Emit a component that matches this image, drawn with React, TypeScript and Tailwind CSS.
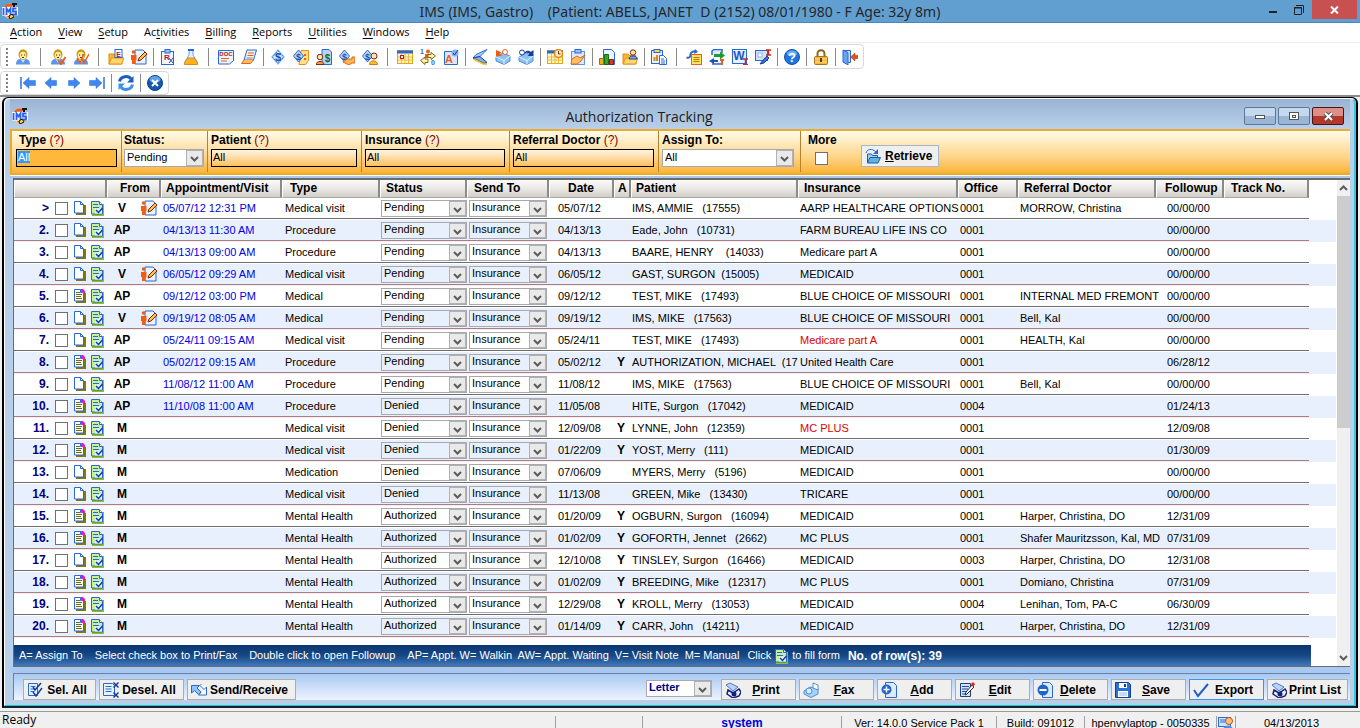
import React, { useEffect, useRef, useState } from "react";

const BLUE = "#2a68d4";
const ORANGE = "#ee5f14";

/* ---------- small icon parts ---------- */

function Icon({ size = 16, children }: { size?: number; children: React.ReactNode }) {
  return (
    <svg width={size} height={size} viewBox="0 0 16 16" fill="none" className="shrink-0" aria-hidden="true">
      {children}
    </svg>
  );
}

function Glyph({ x, y, size, fill, children }: { x: number; y: number; size: number; fill: string; children: string }) {
  return (
    <text x={x} y={y} fontSize={size} fill={fill} fontFamily="Liberation Sans, sans-serif" fontWeight="bold" textAnchor="middle">
      {children}
    </text>
  );
}

const person = (
  <>
    <path d="M1 15.500c0-4 2-5.500 4.500-5.500h5c2.500 0 4.500 1.500 4.500 5.500z" fill="#5b96ee" />
    <path d="M5.500 10h5L8 14z" fill="#cfe2ff" />
    <ellipse cx="8" cy="5.500" rx="4.500" ry="5.200" fill="#c79a10" />
    <ellipse cx="8" cy="6.500" rx="3.300" ry="3.800" fill="#ffe9a0" />
    <path d="M6 6h1.200M9 6h1.200M7 8.500h2" stroke="#4a3510" />
  </>
);

const diamond = (
  <>
    <path d="M8 0l7 8-7 8-7-8z" fill="#9cc6f7" />
    <path d="M8 1.500l5.500 6.500L8 14.500 2.500 8z" fill="#d7e9ff" stroke={BLUE} strokeDasharray="2 1" />
    <Glyph x={8} y={12} size={11} fill="#1c4fa8">$</Glyph>
  </>
);

const smallDiamond = (
  <>
    <path d="M5.500 1l5 6-5 6-5-6z" fill="#b8d8fb" stroke={BLUE} />
    <Glyph x={5.5} y={10.5} size={9} fill="#1c4fa8">$</Glyph>
  </>
);

const printerBase = (
  <>
    <path d="M1 8l7-4 7 3v5l-6 3.500L1 12z" fill="#8fc1f3" stroke="#4e8fd6" />
    <path d="M1 8l8 3.500L15 7M9 11.500v4" stroke="#e4f2ff" />
  </>
);

const folder = (
  <>
    <path d="M1 15V5h5l1 1.500h7V15z" fill="#ffb52e" stroke="#e08a10" />
    <path d="M3.500 9H16l-2.500 6H1z" fill="#ffd66b" stroke="#e9901a" />
  </>
);

const calendar = (
  <>
    <rect x="0.500" y="1.500" width="15" height="13" fill="#fff7c8" stroke="#e7a51a" />
    <path d="M0 3h16" stroke={BLUE} strokeWidth="3" />
    <path d="M4.500 5v9M8 5v9M11.500 5v9M1 8h14M1 11h14" stroke="#f0b93c" />
  </>
);

const icons: Record<string, React.ReactNode> = {
  "Patient": person,
  "Check in": <>{person}<path d="M8 11l3 4 4.500-7" stroke={ORANGE} strokeWidth="2" /></>,
  "Check out": <>{person}<path d="M4 9l3 5 4-9M9 10l2 4 5-9" stroke={ORANGE} strokeWidth="1.500" /></>,
  "EMR folder": <>{folder}<rect x="7" y="0.500" width="7" height="8" fill="#fff" stroke={BLUE} /><Glyph x={10.5} y={7.500} size={7} fill="#b01818">E</Glyph></>,
  "Visit note": (
    <>
      <path d="M4 1h8l3 3v11H4z" fill="#e9f2ff" stroke={BLUE} />
      <circle cx="2.500" cy="3" r="1.800" fill={ORANGE} />
      <path d="M0 6h5.500v5H4.500v4H1v-4H0z" fill={ORANGE} />
      <path d="M7 12l1-3 6-6 2 2-6 6z" fill="#ffc83a" stroke="#8c1d10" />
    </>
  ),
  "Prescription": (
    <>
      <rect x="1.500" y="2.500" width="12" height="13" fill="#eef5ff" stroke={BLUE} />
      <rect x="5" y="0.500" width="5" height="3.500" fill="#9cc0f5" stroke={BLUE} />
      <Glyph x={7} y={11} size={8} fill="#c01818">R</Glyph>
      <path d="M9 9l4 5M13 9l-4 5" stroke="#2446a8" />
    </>
  ),
  "Lab": (
    <>
      <path d="M6 1v5L1.500 13.500V15h13v-1.500L10 6V1z" fill="#e4f0ff" stroke="#6da0e8" />
      <path d="M5 9l-3.500 5v1.500h13V14L11 9z" fill="#ffb21c" stroke="#e08a10" />
      <path d="M5 1h6" stroke={BLUE} strokeWidth="2" />
    </>
  ),
  "Document": (
    <>
      <path d="M0.500 1.500h15v10l-4 3.500h-11z" fill="#eaf2ff" stroke={BLUE} />
      <Glyph x={8} y={7} size={6} fill="#b01818">DOC</Glyph>
      <path d="M3 9.500h8M3 12h6" stroke={ORANGE} />
    </>
  ),
  "Notes": (
    <>
      <path d="M6 1h9.500l-3 10H3z" fill="#eaf2ff" stroke={BLUE} />
      <path d="M3 11l-2.500 3.500h9L12.500 11" fill="#ffc05a" stroke={ORANGE} />
      <path d="M7 4h6M6.500 6.500h6M5.500 9h6" stroke={ORANGE} />
    </>
  ),
  "Charges": diamond,
  "Payments": <><path d="M8 1.500h7.500v10l-3 4H6z" fill="#ffe08a" stroke="#e88c1a" />{smallDiamond}<path d="M12 5v2M12 9v2" stroke={ORANGE} strokeWidth="2" /></>,
  "Statement": (
    <>
      <path d="M6 0.500h7l2.500 2.500v12.500H6z" fill="#b9d4fb" stroke={BLUE} />
      <Glyph x={11.5} y={13} size={10} fill="#156b28">$</Glyph>
      <circle cx="4" cy="8" r="2.800" fill="#ffe3b0" stroke="#7a2c10" />
      <path d="M0 15.500c0-4 8-4 8 0z" fill="#ff9a4a" stroke="#7a2c10" />
    </>
  ),
  "Claims": <>{smallDiamond}<path d="M4 13l4-3h5V8h3v6h-3l-3 2z" fill="#ffb84d" stroke="#e0641a" /></>,
  "Patient balance": <>{smallDiamond}<circle cx="12" cy="7" r="3" fill="#ffe3b0" stroke="#7a2c10" /><path d="M7.500 15.500c0-5 8-5 8 0z" fill="#ffc02a" stroke="#d07a10" /></>,
  "Schedule": <>{calendar}<rect x="3.500" y="6.500" width="3" height="3" fill="#fff" stroke="#c01818" /></>,
  "Patient flow": (
    <>
      <circle cx="8" cy="2.500" r="2" fill={ORANGE} />
      <path d="M5 5h6v4H5z" fill={ORANGE} />
      <path d="M8 5.500h3v-2l4.500 3.500L11 10.500v-2H8zM8 10H5V8L0.500 11.500 5 15.500v-2h3z" fill="#fff2b0" stroke="#7d6a10" />
      <Glyph x={2} y={5} size={7} fill={BLUE}>1</Glyph>
      <Glyph x={13} y={16} size={7} fill={BLUE}>0</Glyph>
    </>
  ),
  "Authorization": (
    <>
      <path d="M1.500 2.500h9l4 4v9h-13z" fill="#d9e8ff" stroke={BLUE} />
      <Glyph x={6} y={13.500} size={11} fill={ORANGE}>A</Glyph>
      <circle cx="12" cy="4" r="3.500" fill="#7fb2f5" />
      <path d="M10 4l1.500 2L15 1" stroke="#1c3f98" />
    </>
  ),
  "Scan": <><path d="M15 0.500L4 5.500 1 9l7-1.500z" fill="#a9cdfa" stroke={BLUE} /><path d="M1 9l11 5.500 3-1-7-6z" fill="#7aaef0" stroke="#1c3f98" /><path d="M1.500 10l10 5h3.500" stroke="#f2b81c" strokeWidth="1.500" /></>,
  "Fax in": <>{printerBase}<path d="M1 1v6h6L5 5c2-3 5-2 5 0" fill={ORANGE} /><circle cx="10" cy="3" r="2.500" fill="#fff" stroke={ORANGE} /></>,
  "Fax out": <>{printerBase}<path d="M15.500 1v6h-6l2-2c-2-2-4-1-5 0 0-4 5-4 6-2z" fill="#123f9c" /><circle cx="4" cy="3.500" r="2.500" fill="#fff" stroke="#123f9c" /></>,
  "Appointments": <>{calendar}<circle cx="11.500" cy="4.500" r="4" fill="#fff1c0" stroke="#e8801a" strokeWidth="1.500" /><path d="M11.500 2v3h2" stroke="#7a2c10" /></>,
  "Tasks": (
    <>
      <rect x="1.500" y="2.500" width="13" height="13" fill="#dbe9ff" stroke="#5f97ea" />
      <rect x="5" y="0.500" width="6" height="3.500" fill="#9cc0f5" stroke={BLUE} />
      <path d="M1 15l1-5 5-3 3 2 5-3-4 6-4 3z" fill="#ffc46a" stroke={ORANGE} />
    </>
  ),
  "Chart": (
    <>
      <path d="M4.500 0.500h8l3 3v12h-11z" fill="#eaf3ff" stroke={BLUE} />
      <path d="M0.500 9.500h4v6h-4z" fill="#f0b01c" stroke="#a06a10" />
      <path d="M5.500 5.500h4v10h-4z" fill="#35a52c" stroke="#156b18" />
      <path d="M10.500 10.500h4v5h-4z" fill="#e0341c" stroke="#8c1d10" />
    </>
  ),
  "Patient folder": <>{folder}<circle cx="11" cy="3.500" r="2.700" fill="#ffe3b0" stroke="#7a2c10" /><path d="M7 10c0-4 8-4 8 0z" fill="#7fa8f0" stroke="#1c3f98" /></>,
  "Report": (
    <>
      <rect x="0.500" y="1.500" width="11" height="13" fill="#e6f0ff" stroke={BLUE} />
      <rect x="3" y="0.500" width="6" height="3" fill="#ffd45a" stroke={BLUE} />
      <path d="M3.500 12V8M6 12V6" stroke="#e08a10" strokeWidth="2" />
      <path d="M8.500 6.500h4l3 3v6h-7z" fill="#fff" stroke={BLUE} />
      <path d="M10 10h3M10 12h4M10 14h4" stroke={BLUE} />
    </>
  ),
  "Send note": <><path d="M0.500 8.500c3 1 4-1 4-3s3-4 6-3" stroke={BLUE} strokeWidth="2" /><path d="M9 0l3 3-4 2z" fill={BLUE} /><rect x="5.500" y="5.500" width="10" height="10" fill="#ffe35a" stroke={ORANGE} /><path d="M7.500 8.500h6M7.500 10.500h6M7.500 12.500h6" stroke="#b07a10" /></>,
  "Transfer": (
    <>
      <path d="M3 6V2l2-1.500h8V4M13 12v3H3" fill="#dfeaff" stroke={BLUE} strokeWidth="1.500" />
      <path d="M5 5h6V2.500l5 4-5 4V8H5z" fill="#1c9a34" />
      <path d="M9 11H5V9l-5 3 5 3v-2h4z" fill="#1f4fc0" />
      <path d="M11 11h4M13 11v5" stroke={ORANGE} strokeWidth="2" />
    </>
  ),
  "Word": <><rect x="0.500" y="0.500" width="14" height="14" fill="#e6f0ff" stroke={BLUE} /><Glyph x={7} y={11} size={12} fill="#1f55c4">W</Glyph><path d="M11 10h5M11 15.500h5M13.500 10v5" stroke="#d0241c" strokeWidth="1.500" /></>,
  "Template": (
    <>
      <rect x="0.500" y="1.500" width="12" height="10" fill="#cfe2ff" stroke={BLUE} />
      <rect x="3" y="4" width="4" height="4" fill="#fff" stroke="#8fb4ee" />
      <path d="M5 15l3-4 4-4 2 2-5 5z" fill="#3e72d8" stroke="#1c3f98" />
      <path d="M11 1h5M11 6h5M13.500 1v5" stroke="#d0241c" strokeWidth="1.500" />
    </>
  ),
  "Help": <><circle cx="8" cy="8" r="7.500" fill="#1f74e0" stroke="#1650b0" /><ellipse cx="8" cy="4.500" rx="5" ry="3" fill="#6cb0f8" /><Glyph x={8} y={12.5} size={13} fill="#fff">?</Glyph></>,
  "Lock": <><path d="M4.500 8V5c0-5 7-5 7 0v3" stroke="#8a6a24" strokeWidth="2" /><rect x="1.500" y="7.500" width="13" height="8" rx="1" fill="#f0b83c" stroke="#a8741c" /><path d="M2 10h12M2 13h12" stroke="#ffdf80" /><path d="M8 9v4" stroke="#5a3a08" strokeWidth="2" /></>,
  "Exit": <><path d="M1.500 1.500h7v12h-7z" fill="#cfe2ff" stroke={BLUE} /><path d="M1 1l5 2.500V16l-5-3z" fill="#69a2f2" stroke={BLUE} /><path d="M16 6.500h-3V4L8.500 8l4.500 4V9.500h3z" fill="#e0501c" stroke="#a02c10" strokeWidth="0.500" /></>,
};

const toolGroups: { gap: string; names: string[] }[] = [
  { gap: "w-3", names: ["Patient"] },
  { gap: "w-3", names: ["Check in", "Check out"] },
  { gap: "w-3", names: ["EMR folder", "Visit note"] },
  { gap: "w-1.5", names: ["Prescription", "Lab"] },
  { gap: "w-3", names: ["Document", "Notes"] },
  { gap: "w-1.5", names: ["Charges", "Payments", "Statement", "Claims", "Patient balance"] },
  { gap: "w-3", names: ["Schedule", "Patient flow", "Authorization"] },
  { gap: "w-1.5", names: ["Scan", "Fax in", "Fax out"] },
  { gap: "w-1.5", names: ["Appointments", "Tasks"] },
  { gap: "w-1.5", names: ["Chart", "Patient folder"] },
  { gap: "w-1.5", names: ["Report"] },
  { gap: "w-3", names: ["Send note", "Transfer", "Word", "Template"] },
  { gap: "w-1.5", names: ["Help"] },
  { gap: "w-1.5", names: ["Lock"] },
  { gap: "w-1.5", names: ["Exit"] },
];

const arrowLeft = "M8 2.500V5.500h5.500v5H8v3L2 8z";
const arrowRight = "M8 2.500V5.500H2.500v5H8v3L14 8z";

function Separator({ width }: { width: string }) {
  return (
    <span className={`flex justify-center ${width}`}>
      <span className="h-[18px] w-px bg-[#8a8a8a]" />
    </span>
  );
}

function ToolButton({ label, children }: { label: string; children: React.ReactNode }) {
  return (
    <button type="button" aria-label={label} title={label} className="flex h-6 w-[23px] items-center justify-center">
      {children}
    </button>
  );
}

function Grip() {
  return (
    <span className="ml-[5px] flex flex-col gap-[2px]">
      {[0, 1, 2, 3, 4].map((n) => <span key={n} className="h-[2px] w-[2px] bg-[#808080]" />)}
    </span>
  );
}

function AppLogo() {
  return (
    <Icon>
      <circle cx="8" cy="8" r="7.500" fill="#f5b8a2" />
      <path d="M2 4c2-4.500 9-4.500 11-1zM5 13c3 4 7 2 8-1z" fill={ORANGE} />
      <rect x="0" y="4" width="16" height="8.500" fill="#fff" />
      <path d="M1.500 5v7M4.500 12V5.500l2 3 2-3V12M14.500 5.500h-3.500v3h3v3h-4" stroke="#2a5ff0" strokeWidth="1.800" />
      <path d="M10 0h5v2h-2v2h-2V2h-1z" fill="#111" />
      <path d="M7 13l3-2 2 3-4 2z" fill="#ffe01c" stroke="#111" />
    </Icon>
  );
}

/* ---------- drop-down ---------- */

function Combo({ label, value, options, className, text = "" }: { label: string; value: string; options: string[]; className: string; text?: string }) {
  return (
    <span className={`relative flex border border-[#a9a9ad] ${className}`}>
      <select aria-label={label} defaultValue={value} className={`min-w-0 flex-1 appearance-none bg-transparent pr-[18px] pb-[2px] pl-[2px] leading-[13px] outline-none ${text}`}>
        {options.map((o) => <option key={o}>{o}</option>)}
      </select>
      <span className="pointer-events-none absolute inset-y-0 right-0 flex w-[17px] items-center justify-center border border-[#b2b2b4] bg-[#e9e9e9] pt-[2px]">
        <svg width="9" height="6" viewBox="0 0 9 6" fill="none" aria-hidden="true">
          <path d="M1 1l3.500 3.500L8 1" stroke="#5c5c5c" strokeWidth="2" />
        </svg>
      </span>
    </span>
  );
}

const statuses = ["Pending", "Denied", "Authorized"];

/* ---------- table data ---------- */

type Row = {
  from: string; when?: string; type: string; status: string; date: string; a?: boolean; patient: string;
  ins: string; red?: boolean; office: string; doctor?: string; followup: string; lined?: boolean;
};

const rows: Row[] = [
  { from: "V", when: "05/07/12 12:31 PM", type: "Medical visit", status: "Pending", date: "05/07/12", patient: "IMS, AMMIE   (17555)", ins: "AARP HEALTHCARE OPTIONS", office: "0001", doctor: "MORROW, Christina", followup: "00/00/00" },
  { from: "AP", when: "04/13/13 11:30 AM", type: "Procedure", status: "Pending", date: "04/13/13", patient: "Eade, John   (10731)", ins: "FARM BUREAU LIFE INS CO", office: "0001", followup: "00/00/00" },
  { from: "AP", when: "04/13/13 09:00 AM", type: "Procedure", status: "Pending", date: "04/13/13", patient: "BAARE, HENRY    (14033)", ins: "Medicare part A", office: "0001", followup: "00/00/00" },
  { from: "V", when: "06/05/12 09:29 AM", type: "Medical visit", status: "Pending", date: "06/05/12", patient: "GAST, SURGON  (15005)", ins: "MEDICAID", office: "0001", followup: "00/00/00" },
  { from: "AP", when: "09/12/12 03:00 PM", type: "Medical", status: "Pending", date: "09/12/12", patient: "TEST, MIKE   (17493)", ins: "BLUE CHOICE OF MISSOURI", office: "0001", doctor: "INTERNAL MED FREMONT", followup: "00/00/00", lined: true },
  { from: "V", when: "09/19/12 08:05 AM", type: "Medical", status: "Pending", date: "09/19/12", patient: "IMS, MIKE   (17563)", ins: "BLUE CHOICE OF MISSOURI", office: "0001", doctor: "Bell, Kal", followup: "00/00/00" },
  { from: "AP", when: "05/24/11 09:15 AM", type: "Medical visit", status: "Pending", date: "05/24/11", patient: "TEST, MIKE   (17493)", ins: "Medicare part A", red: true, office: "0001", doctor: "HEALTH, Kal", followup: "00/00/00" },
  { from: "AP", when: "05/02/12 09:15 AM", type: "Procedure", status: "Pending", date: "05/02/12", a: true, patient: "AUTHORIZATION, MICHAEL  (17", ins: "United Health Care", office: "0001", followup: "06/28/12", lined: true },
  { from: "AP", when: "11/08/12 11:00 AM", type: "Procedure", status: "Pending", date: "11/08/12", patient: "IMS, MIKE   (17563)", ins: "BLUE CHOICE OF MISSOURI", office: "0001", doctor: "Bell, Kal", followup: "00/00/00" },
  { from: "AP", when: "11/10/08 11:00 AM", type: "Procedure", status: "Denied", date: "11/05/08", patient: "HITE, Surgon   (17042)", ins: "MEDICAID", office: "0004", followup: "01/24/13", lined: true },
  { from: "M", type: "Medical visit", status: "Denied", date: "12/09/08", a: true, patient: "LYNNE, John   (12359)", ins: "MC PLUS", red: true, office: "0001", followup: "12/09/08", lined: true },
  { from: "M", type: "Medical visit", status: "Denied", date: "01/22/09", a: true, patient: "YOST, Merry   (111)", ins: "MEDICAID", office: "0001", followup: "01/30/09", lined: true },
  { from: "M", type: "Medication", status: "Denied", date: "07/06/09", patient: "MYERS, Merry   (5196)", ins: "MEDICAID", office: "0001", followup: "00/00/00" },
  { from: "M", type: "Medical visit", status: "Denied", date: "11/13/08", patient: "GREEN, Mike   (13430)", ins: "TRICARE", office: "0001", followup: "00/00/00" },
  { from: "M", type: "Mental Health", status: "Authorized", date: "01/20/09", a: true, patient: "OGBURN, Surgon   (16094)", ins: "MEDICAID", office: "0001", doctor: "Harper, Christina, DO", followup: "12/31/09", lined: true },
  { from: "M", type: "Mental Health", status: "Authorized", date: "01/02/09", a: true, patient: "GOFORTH, Jennet   (2662)", ins: "MC PLUS", office: "0001", doctor: "Shafer Mauritzsson, Kal, MD", followup: "07/31/09", lined: true },
  { from: "M", type: "Mental Health", status: "Authorized", date: "12/10/08", a: true, patient: "TINSLEY, Surgon   (16466)", ins: "MEDICAID", office: "0003", doctor: "Harper, Christina, DO", followup: "12/31/08" },
  { from: "M", type: "Mental Health", status: "Authorized", date: "01/02/09", a: true, patient: "BREEDING, Mike   (12317)", ins: "MC PLUS", office: "0001", doctor: "Domiano, Christina", followup: "07/31/09", lined: true },
  { from: "M", type: "Mental Health", status: "Authorized", date: "12/29/08", a: true, patient: "KROLL, Merry   (13053)", ins: "MEDICAID", office: "0004", doctor: "Lenihan, Tom, PA-C", followup: "06/30/09", lined: true },
  { from: "M", type: "Mental Health", status: "Authorized", date: "01/14/09", a: true, patient: "CARR, John   (14211)", ins: "MEDICAID", office: "0001", doctor: "Harper, Christina, DO", followup: "12/31/09", lined: true },
];

const columns = [
  { title: "", col: "w-[93px]", pad: "" },
  { title: "From", col: "w-[54px]", pad: "pl-3" },
  { title: "Appointment/Visit", col: "w-[121px]", pad: "pl-1" },
  { title: "Type", col: "w-[98px]", pad: "pl-[7px]" },
  { title: "Status", col: "w-[87px]", pad: "pl-[5px]" },
  { title: "Send To", col: "w-[82px]", pad: "pl-[6px]" },
  { title: "Date", col: "w-[65px]", pad: "pl-[18px]" },
  { title: "A", col: "w-[17px]", pad: "pl-[3px]" },
  { title: "Patient", col: "w-[167px]", pad: "pl-1" },
  { title: "Insurance", col: "w-[160px]", pad: "pl-[5px]" },
  { title: "Office", col: "w-[60px]", pad: "pl-[5px]" },
  { title: "Referral Doctor", col: "w-[138px]", pad: "pl-[5px]" },
  { title: "Followup", col: "w-[68px]", pad: "pl-2" },
  { title: "Track No.", col: "w-[85px]", pad: "pl-[6px]" },
];

function PageIcon({ lined }: { lined?: boolean }) {
  return (
    <svg width="12" height="14" viewBox="0 0 12 14" fill="none" aria-hidden="true">
      <path d="M2 13h9V4" stroke="#7d7a10" strokeWidth="2" />
      <path d="M0.500 0.500h6l3 3v8.500h-9z" fill="#fff" stroke={BLUE} />
      <path d="M6.500 0.500v3h3" stroke={BLUE} />
      {lined && (
        <>
          <path d="M7 0h2l2 2v2H7z" fill="#e815d8" />
          <path d="M2 3.500h4M2 5.500h6M2 7.500h5M2 9.500h6" stroke="#6f6a10" />
        </>
      )}
    </svg>
  );
}

function FormIcon() {
  return (
    <svg width="13" height="16" viewBox="0 0 13 16" fill="none" className="shrink-0" aria-hidden="true">
      <path d="M1 15h11.500V4" stroke="#8fc21c" strokeWidth="2" />
      <path d="M0.500 1.500h8l3 3v9.500h-11z" fill="#c6f09c" stroke={BLUE} />
      <path d="M8.500 1.500v3h3" fill="#fff" stroke={BLUE} />
      <path d="M2 4.500h5M2 7.500h6" stroke={BLUE} />
      <path d="M4 8.500h7v5H4z" fill="#e2f4ff" />
      <path d="M5 10l2.500 2.500L11.500 8" stroke="#123f9c" strokeWidth="1.500" />
    </svg>
  );
}

/* ---------- footer icons ---------- */

const footerIcons: Record<string, React.ReactNode> = {
  sel: <><path d="M1.500 1.500h9v12h-9z" fill="#e6f1ff" stroke={BLUE} /><path d="M3.500 4.500h5M3.500 7h4M3.500 9.500h4" stroke={BLUE} /><path d="M6 5l2 3 6-7M6 10l3 4 6-8" stroke="#123f9c" strokeWidth="1.500" /></>,
  desel: <><path d="M0.500 1.500h9l2 2v10h-11z" fill="#e6f1ff" stroke={BLUE} /><path d="M2.500 4.500h6M2.500 7h6M2.500 9.500h6" stroke={BLUE} /><path d="M10.500 0.500l5 5M15.500 0.500l-5 5M10.500 10.500l5 5M15.500 10.500l-5 5" stroke="#123f9c" strokeWidth="1.500" /></>,
  send: <><path d="M0.500 3.500h8L6 6l4 4-2.500 2.500-4-4L0.500 11z" fill="#8fc4f8" stroke={BLUE} /><path d="M15.500 5v8h-8l2.500-2.500M15.500 5L13 7.500 9 3.500l1.500-1.500" fill="#fff" stroke={BLUE} /></>,
  print: <><path d="M1 3l4-2 8 4-5 4z" fill="#b9d4f8" stroke="#4e78c8" /><path d="M3 8l5 3 6-4 2 3-2 4-6 2-6-4z" fill="#e8f0ff" stroke="#16227a" strokeWidth="1.500" /><circle cx="9" cy="12" r="2.500" fill="#16227a" /></>,
  fax: <><path d="M1 9l6-4 8 2v5l-7 3.500L1 12z" fill="#a9d2f8" stroke="#4e8fd6" /><circle cx="6" cy="9" r="3" fill="#d9edff" stroke="#4e8fd6" /><path d="M10 6V1l5 2v5z" fill="#fff" stroke="#4e8fd6" /></>,
  add: <><path d="M4.500 0.500h8l3 3v12h-11z" fill="#dcebff" stroke={BLUE} /><circle cx="5.500" cy="7.500" r="5" fill="#1f66cc" /><path d="M2.500 7.500h6M5.500 4.500v6" stroke="#fff" strokeWidth="1.500" /></>,
  edit: <><path d="M1.500 1.500h10v13h-10z" fill="#cfe4ff" stroke="#1f3f80" /><path d="M3 4.500h7M3 7h6M3 9.500h5M3 12h5" stroke="#1f4f9c" /><path d="M6 13l1-3 6-7 2 2-7 7z" fill="#f4f4f4" stroke="#333" /><path d="M12 2l2-2 2 2-2 3z" fill="#e0241c" /></>,
  del: <><path d="M5.500 0.500h7l3 3v12h-10z" fill="#dcebff" stroke={BLUE} /><circle cx="6" cy="8" r="5.500" fill="#1f66cc" /><path d="M2.500 8h7" stroke="#fff" strokeWidth="2" /></>,
  save: <><path d="M0.500 0.500h13l2 2v13h-15z" fill="#2a72d8" stroke="#123f8c" /><path d="M4 1h8v5H4z" fill="#fff" /><path d="M9 2h2v3H9z" fill="#123f8c" /><path d="M3 9h10v6H3z" fill="#fff" /><path d="M4 11h8M4 13h8" stroke="#8fb4ee" /></>,
  exp: <path d="M1 8l4 6L15 2" stroke="#1f5fd0" strokeWidth="2" />,
};

function FooterButton({ icon, label, width, focus, hotkey }: { icon: string; label: string; width: string; focus?: boolean; hotkey?: boolean }) {
  return (
    <button type="button" className={`flex h-[21px] items-center border bg-[#efefef] pr-1 pl-[3px] text-xs font-bold text-black ${focus ? "border-[#3c94e8]" : "border-[#acacac]"} ${width}`}>
      <Icon>{footerIcons[icon]}</Icon>
      <span className="flex-1 text-center whitespace-nowrap">
        {hotkey ? <><span className="underline">{label[0]}</span>{label.slice(1)}</> : label}
      </span>
    </button>
  );
}

function Field({ label, width }: { label: string; width: string }) {
  const id = label.replace(" ", "-").toLowerCase();
  return (
    <div className={`border-r border-[#b5832d] pr-1 pl-[3px] ${width}`}>
      <label htmlFor={id} className="block text-xs leading-[18px] font-bold whitespace-nowrap text-black">
        {label} <span className="font-normal text-[#800000]">(?)</span>
      </label>
      <input id={id} defaultValue="All" className="block h-[18px] w-full border border-black bg-linear-to-b from-[#fff4e0] to-[#fdc05a] px-px pb-[2px] text-[11px] outline-none" />
    </div>
  );
}

const menus: [string, string, string][] = [
  ["", "A", "ction"], ["", "V", "iew"], ["", "S", "etup"], ["Ac", "t", "ivities"], ["", "B", "illing"],
  ["", "R", "eports"], ["", "U", "tilities"], ["", "W", "indows"], ["", "H", "elp"],
];

export default function App() {
  const typeRef = useRef<HTMLInputElement>(null);
  const [checked, setChecked] = useState<Record<number, boolean>>({});

  useEffect(() => {
    typeRef.current?.focus();
    typeRef.current?.select();
  }, []);

  return (
    <div className="flex min-h-screen flex-col bg-white font-['Liberation_Sans',Arial,sans-serif] text-[11px] text-black">
      {/* Application title bar */}
      <header className="flex h-[23px] items-start border-b border-[#4a87bd] bg-[#629fd1]">
        <span className="flex w-[140px] pt-[3px] pl-[2px]"><AppLogo /></span>
        <h1 className="flex-1 text-center font-['Noto_Sans',sans-serif] text-[14px] leading-[23px] whitespace-pre text-[#262626]">
          {"IMS (IMS, Gastro)    (Patient: ABELS, JANET  D (2152) 08/01/1980 - F Age: 32y 8m)"}
        </h1>
        <div className="flex w-[140px] justify-end pr-[3px]">
          <button type="button" aria-label="Minimize" className="flex h-[19px] w-[26px] items-center justify-center">
            <span className="mt-1 h-[2px] w-2 bg-[#222]" />
          </button>
          <button type="button" aria-label="Restore" className="flex h-[19px] w-[26px] items-center justify-center">
            <svg width="10" height="10" viewBox="0 0 10 10" fill="none" aria-hidden="true">
              <path d="M0 3h7.500M2 0.500h7.500V8" stroke="#222" />
              <path d="M0.500 2.500h7v7h-7z" stroke="#222" />
            </svg>
          </button>
          <button type="button" aria-label="Close" className="flex h-[19px] w-[45px] items-center justify-center bg-[#c75050]">
            <svg width="9" height="8" viewBox="0 0 9 8" aria-hidden="true"><path d="M1 0.500l7 7M8 0.500l-7 7" stroke="#fff" strokeWidth="2" /></svg>
          </button>
        </div>
      </header>

      <nav className="flex h-5 items-center gap-4 border-b border-[#ececec] pl-[10px] font-['Open_Sans',sans-serif] text-[11px]">
        {menus.map(([before, key, after]) => (
          <button key={key + after} type="button">{before}<span className="underline underline-offset-2">{key}</span>{after}</button>
        ))}
      </nav>

      {/* Toolbars */}
      <div className="flex flex-col items-start gap-[2px] pt-px">
        <div className="flex h-[25px] items-center rounded-sm border border-[#d8d8d8] pr-[2px]" role="toolbar" aria-label="Main">
          <Grip />
          <span className="w-[3px]" />
          {toolGroups.map((g, i) => (
            <React.Fragment key={i}>
              {i > 0 && <Separator width={g.gap} />}
              {g.names.map((n) => <ToolButton key={n} label={n}><Icon>{icons[n]}</Icon></ToolButton>)}
            </React.Fragment>
          ))}
        </div>
        <div className="flex h-[24px] items-center rounded-sm border border-[#d8d8d8] pr-[2px]" role="toolbar" aria-label="Navigation">
          <Grip />
          <span className="w-2" />
          <ToolButton label="First"><Icon><path d="M1 2v12" stroke="#2e6fe0" strokeWidth="1.500" /><path d="M9 2.500v3h6.500v5H9v3L3 8z" fill="#3f86f0" stroke="#2e6fe0" strokeWidth="0.500" /></Icon></ToolButton>
          <ToolButton label="Previous"><Icon><path d={arrowLeft} fill="#3f86f0" stroke="#2e6fe0" strokeWidth="0.500" /></Icon></ToolButton>
          <ToolButton label="Next"><Icon><path d={arrowRight} fill="#3f86f0" stroke="#2e6fe0" strokeWidth="0.500" /></Icon></ToolButton>
          <ToolButton label="Last"><Icon><path d="M15 2v12" stroke="#2e6fe0" strokeWidth="1.500" /><path d="M7 2.500v3H0.500v5H7v3L13 8z" fill="#3f86f0" stroke="#2e6fe0" strokeWidth="0.500" /></Icon></ToolButton>
          <Separator width="w-1.5" />
          <ToolButton label="Refresh">
            <Icon>
              <path d="M1.500 6.500c1-5.500 9-6.500 11.500-2.500" stroke="#1d5fbe" strokeWidth="3" /><path d="M15.500 1v6.500H9z" fill="#1d5fbe" />
              <path d="M14.500 9.500c-1 5.500-9 6.500-11.500 2.500" stroke="#3f90e8" strokeWidth="3" /><path d="M0.500 15V8.500H7z" fill="#3f90e8" />
            </Icon>
          </ToolButton>
          <Separator width="w-1.5" />
          <ToolButton label="Close form">
            <Icon><circle cx="8" cy="8" r="7.500" fill="#1559ad" stroke="#0c3f80" /><ellipse cx="8" cy="4.500" rx="5.500" ry="3.500" fill="#5aa0e6" /><path d="M5 5l6 6M11 5l-6 6" stroke="#fff" strokeWidth="2" /></Icon>
          </ToolButton>
        </div>
      </div>

      {/* Child window */}
      <div className="flex flex-1 flex-col border-t-2 border-[#8c8c8c] bg-[#f0f0f0] px-[2px] pb-[3px]">
        <main className="flex flex-1 flex-col rounded-t-md border-2 border-t border-black border-b-[#11252b] bg-[#b8cfea]">
          <div className="flex flex-1 flex-col rounded-t-md border-t border-r-2 border-b border-l border-t-white border-r-[#35c8e6] border-b-[#1cc4d4] border-l-white pr-1 pb-[5px] pl-[5px]">
            <div className="flex h-[30px] items-center bg-linear-to-b from-[#99b4d3] to-[#b9d0ea] px-[2px]">
              <span className="flex w-6 pt-1"><AppLogo /></span>
              <h2 className="flex-1 pt-1 text-center font-['Open_Sans',sans-serif] text-[14px] text-[#1c1c1c]">Authorization Tracking</h2>
              <div className="flex w-[106px] justify-end gap-[2px] pt-1 pr-1">
                <button type="button" aria-label="Minimize window" className="flex h-[18px] w-8 items-center justify-center rounded-xs border border-[#5f7699] bg-linear-to-b from-[#c5d8ee] from-50% to-[#9bb6d6] to-50%">
                  <span className="mt-[2px] h-1 w-[10px] border border-[#555] bg-white" />
                </button>
                <button type="button" aria-label="Maximize window" className="flex h-[18px] w-8 items-center justify-center rounded-xs border border-[#5f7699] bg-linear-to-b from-[#c5d8ee] from-50% to-[#9bb6d6] to-50%">
                  <span className="flex h-2 w-[10px] items-center justify-center border border-[#555] bg-white"><span className="h-[3px] w-1 border border-[#555]" /></span>
                </button>
                <button type="button" aria-label="Close window" className="flex h-[18px] w-8 items-center justify-center rounded-xs border border-[#4a1418] bg-linear-to-b from-[#dd8f87] from-50% to-[#b5382a] to-50%">
                  <svg width="11" height="9" viewBox="0 0 11 9" aria-hidden="true"><path d="M2 1l7 7M9 1L2 8" stroke="#555" strokeWidth="4" /><path d="M2 1l7 7M9 1L2 8" stroke="#fff" strokeWidth="2" /></svg>
                </button>
              </div>
            </div>

            {/* Filters */}
            <form className="flex h-[46px] border-2 border-r-0 border-[#eeaa2b] bg-linear-to-b from-[#fffbe9] via-[#fdd68a] via-60% to-[#fbb32f] pb-px" onSubmit={(e) => e.preventDefault()}>
              <div className="w-[110px] border-r border-[#b5832d] pr-1 pl-1">
                <label htmlFor="type" className="block pl-[3px] text-xs leading-[18px] font-bold">Type <span className="font-normal text-[#800000]">(?)</span></label>
                <input id="type" ref={typeRef} defaultValue="All" className="block h-[18px] w-full border border-black bg-[#ffb83c] px-px pb-[2px] text-[11px] caret-transparent outline-none selection:bg-[#3399ff] selection:text-white" />
              </div>
              <div className="w-[86px] border-r border-[#b5832d] pr-[3px] pl-[2px] text-xs">
                <span className="block leading-[18px] font-bold">Status:</span>
                <Combo label="Status" value="Pending" options={statuses} className="h-[18px] bg-white" text="text-[11px]" />
              </div>
              <Field label="Patient" width="w-[154px]" />
              <Field label="Insurance" width="w-[148px]" />
              <Field label="Referral Doctor" width="w-[149px]" />
              <div className="w-[142px] border-r border-[#b5832d] pr-[6px] pl-[3px] text-xs">
                <span className="block leading-[18px] font-bold">Assign To:</span>
                <Combo label="Assign To" value="All" options={["All"]} className="h-[18px] bg-white" text="text-[11px]" />
              </div>
              <div className="w-[54px] pl-[7px]">
                <label htmlFor="more" className="block text-xs leading-[18px] font-bold">More</label>
                <input id="more" type="checkbox" className="mt-[3px] ml-[7px] block h-[13px] w-[13px] appearance-none border border-[#707070] bg-white checked:bg-[#3c94e8]" />
              </div>
              <div className="pt-[14px] pl-[6px]">
                <button type="submit" className="flex h-[22px] w-[78px] items-center gap-1 border border-[#a9b6c8] bg-[#efefef] pl-[3px] text-xs font-bold">
                  <Icon>
                    <path d="M2.500 15V6h4l1 1.500h5V10" fill="#9cd0f0" stroke="#1d5fa8" />
                    <path d="M2.500 15l2.500-5.500h10.500L13 15z" fill="#5fb4e4" stroke="#1d5fa8" />
                    <path d="M1 5c1-4 6-5 10-1" stroke={BLUE} /><path d="M13 1v5H8z" fill={BLUE} />
                  </Icon>
                  <span><span className="underline">R</span>etrieve</span>
                </button>
              </div>
            </form>

            <div className="h-[3px] border-t border-white bg-[#a9c9f2]" />

            {/* Grid */}
            <div className="ml-[3px] flex flex-1 border-t-2 border-b border-l border-[#6b6b6b] bg-white">
              <div className="flex min-w-0 flex-1 flex-col">
                <table className="w-full table-fixed border-separate border-spacing-0">
                  <colgroup>
                    {columns.map((c, i) => <col key={i} className={c.col} />)}
                    <col />
                  </colgroup>
                  <thead>
                    <tr>
                      {columns.map((c, i) => (
                        <th key={i} scope="col" className="p-0">
                          <div className={`h-[18px] border-r-2 border-b border-l border-r-[#8a8a8a] border-b-[#a8a8a8] border-l-white bg-linear-to-b from-[#fafafa] via-[#ebe9e6] via-50% to-[#d2cfc8] text-left text-xs leading-[17px] font-bold whitespace-nowrap ${c.pad}`}>{c.title}</div>
                        </th>
                      ))}
                      <td className="p-0" />
                    </tr>
                  </thead>
                  <tbody>
                    {rows.map((r, i) => {
                      const odd = i % 2 === 1;
                      const cell = `h-[21px] border-b leading-5 whitespace-pre ${odd ? "border-b-[#b5797d]" : "border-b-[#6e6e6e]"}`;
                      return (
                        <tr key={i} className={`h-[22px] align-top ${odd ? "bg-[#e8f0fd]" : "bg-white"}`}>
                          <td className="p-0">
                            <div className={`flex items-center ${cell}`}>
                              <span className="w-[35px] text-right text-xs font-bold text-[#000080]">{i === 0 ? ">" : `${i + 1}.`}</span>
                              <input
                                type="checkbox"
                                aria-label={`Select row ${i + 1}`}
                                checked={!!checked[i]}
                                onChange={() => setChecked({ ...checked, [i]: !checked[i] })}
                                className="ml-[6px] h-[13px] w-[13px] appearance-none border border-[#707070] bg-white checked:bg-[#3c94e8]"
                              />
                              <button type="button" aria-label="Open notes" className="ml-[6px]"><PageIcon lined={r.lined} /></button>
                              <button type="button" aria-label="Fill form" className="ml-[5px]"><FormIcon /></button>
                            </div>
                          </td>
                          <td className="p-0">
                            <div className={`flex items-center ${cell}`}>
                              <span className="w-[30px] text-center text-xs font-bold">{r.from}</span>
                              {r.from === "V" && <span className="ml-1"><Icon>{icons["Visit note"]}</Icon></span>}
                            </div>
                          </td>
                          <td className="p-0"><div className={`pl-[2px] text-[#0000e0] ${cell}`}>{r.when}</div></td>
                          <td className="p-0"><div className={`pl-[3px] ${cell}`}>{r.type}</div></td>
                          <td className="p-0">
                            <div className={`pt-[2px] pl-px ${cell}`}>
                              <Combo label={`Status of row ${i + 1}`} value={r.status} options={statuses} className="h-[17px] w-[86px]" />
                            </div>
                          </td>
                          <td className="p-0">
                            <div className={`pt-[2px] pl-[2px] ${cell}`}>
                              <Combo label={`Send to, row ${i + 1}`} value="Insurance" options={["Insurance"]} className="h-[17px] w-[78px]" />
                            </div>
                          </td>
                          <td className="p-0"><div className={`pl-[9px] ${cell}`}>{r.date}</div></td>
                          <td className="p-0"><div className={`pl-[3px] text-xs font-bold ${cell}`}><span className="leading-5">{r.a ? "Y" : ""}</span></div></td>
                          <td className="p-0"><div className={`pl-px ${cell}`}>{r.patient}</div></td>
                          <td className="p-0"><div className={`pl-[2px] ${r.red ? "text-[#e00000]" : ""} ${cell}`}>{r.ins}</div></td>
                          <td className="p-0"><div className={`pl-[2px] ${cell}`}>{r.office}</div></td>
                          <td className="p-0"><div className={`pl-[2px] ${cell}`}>{r.doctor}</div></td>
                          <td className="p-0"><div className={`pl-[11px] ${cell}`}>{r.followup}</div></td>
                          <td className="p-0"><div className={cell} /></td>
                          <td className="p-0" />
                        </tr>
                      );
                    })}
                  </tbody>
                </table>
                <div className="mt-auto mr-[25px] flex h-[21px] items-center bg-linear-to-b from-[#0a3672] via-[#164884] to-[#4279bd] pl-[5px] whitespace-pre text-white">
                  <span>A= Assign To</span>
                  <span className="ml-3">Select check box to Print/Fax</span>
                  <span className="ml-3">Double click to open Followup</span>
                  <span className="ml-3">AP= Appt. W= Walkin  AW= Appt. Waiting  V= Visit Note  M= Manual</span>
                  <span className="mr-1 ml-2">Click</span>
                  <FormIcon />
                  <span className="ml-1">to fill form</span>
                  <strong className="ml-2 text-xs">No. of row(s): 39</strong>
                </div>
              </div>
              {/* Scroll bar */}
              <div className="ml-px flex w-[13px] flex-col items-center bg-[#f0f0f0]">
                <button type="button" aria-label="Scroll up" className="flex h-4 items-center">
                  <svg width="9" height="6" viewBox="0 0 9 6" fill="none" aria-hidden="true"><path d="M1 5l3.500-3.500L8 5" stroke="#5c5c5c" strokeWidth="2" /></svg>
                </button>
                <div className="h-[232px] w-full bg-[#cdcdcd]" />
                <button type="button" aria-label="Scroll down" className="mt-auto flex h-4 items-center">
                  <svg width="9" height="6" viewBox="0 0 9 6" fill="none" aria-hidden="true"><path d="M1 1l3.500 3.500L8 1" stroke="#5c5c5c" strokeWidth="2" /></svg>
                </button>
              </div>
            </div>

            <div className="h-[6px] bg-[#a9c9f2]" />

            {/* Footer actions */}
            <div className="ml-[3px] flex h-[27px] items-end gap-[3px] border-t border-l border-[#6b80a5] bg-linear-to-b from-[#a9c9f2] to-[#edf4fe] pr-[2px] pl-[9px]">
              <FooterButton icon="sel" label="Sel. All" width="w-[73px]" />
              <FooterButton icon="desel" label="Desel. All" width="w-[85px]" />
              <FooterButton icon="send" label="Send/Receive" width="w-[109px]" />
              <span className="flex-1" />
              <span className="mr-[6px] mb-[3px]">
                <Combo label="Paper size" value="Letter" options={["Letter", "Legal"]} className="h-[17px] w-[66px] bg-white" text="font-bold text-[#000080]" />
              </span>
              <FooterButton icon="print" label="Print" width="w-[75px]" hotkey />
              <FooterButton icon="fax" label="Fax" width="w-[75px]" hotkey />
              <FooterButton icon="add" label="Add" width="w-[75px]" hotkey />
              <FooterButton icon="edit" label="Edit" width="w-[75px]" hotkey />
              <FooterButton icon="del" label="Delete" width="w-[75px]" hotkey />
              <FooterButton icon="save" label="Save" width="w-[75px]" hotkey />
              <FooterButton icon="exp" label="Export" width="w-[75px]" focus />
              <FooterButton icon="print" label="Print List" width="w-[81px]" />
            </div>
          </div>
        </main>
      </div>

      {/* Status bar */}
      <footer className="flex h-[17px] items-start overflow-hidden border-t border-[#9b9b9b] bg-[#f0f0f0] leading-[23px]">
        <span className="w-[555px] pl-[2px] font-['Open_Sans',sans-serif] text-xs leading-4">Ready</span>
        <span className="mt-1 h-4 w-[88px] border-x border-[#a0a0a0]" />
        <span className="flex-1 text-center text-xs leading-[23px] font-bold text-[#0000e0] underline">system</span>
        <span className="mt-1 h-4 w-px bg-[#a0a0a0]" />
        <span className="w-[154px] text-center whitespace-nowrap">Ver: 14.0.0 Service Pack 1</span>
        <span className="mt-1 h-4 w-px bg-[#a0a0a0]" />
        <span className="w-[87px] text-center whitespace-nowrap">Build: 091012</span>
        <span className="mt-1 h-4 w-px bg-[#a0a0a0]" />
        <span className="w-[131px] text-center whitespace-nowrap">hpenvylaptop - 0050335</span>
        <span className="mt-1 flex h-4 w-5 justify-center border-x border-[#a0a0a0]">
          <Icon>
            <rect x="0.500" y="1.500" width="12" height="9" fill="#cfe2ff" stroke={BLUE} />
            <path d="M2 4h6M2 6h5" stroke={BLUE} />
            <circle cx="11" cy="5" r="3.500" fill="#ffc27a" stroke="#b8501c" />
            <path d="M5 14c0-6 10-6 10 0z" fill="#4e8fe8" />
          </Icon>
        </span>
        <span className="w-[124px] pl-7">04/13/2013</span>
      </footer>
    </div>
  );
}
